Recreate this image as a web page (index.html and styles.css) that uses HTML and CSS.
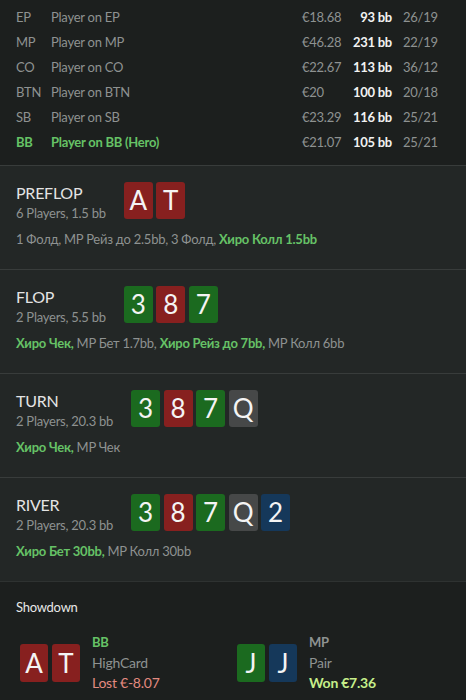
FILE: index.html
```html
<!DOCTYPE html>
<html lang="en">
<head>
    <meta charset="UTF-8">
    <meta name="viewport" content="width=device-width, initial-scale=1.0">
    <title>Hand History</title>
    <link rel="stylesheet" href="styles.css">
</head>
<body>
    <div class="players">
        <div class="player-row">
            <span class="pos">EP</span><span class="name">Player on EP</span>
            <span class="money">€18.68</span><span class="stack">93 bb</span><span class="ratio">26/19</span>
        </div>
        <div class="player-row">
            <span class="pos">MP</span><span class="name">Player on MP</span>
            <span class="money">€46.28</span><span class="stack">231 bb</span><span class="ratio">22/19</span>
        </div>
        <div class="player-row">
            <span class="pos">CO</span><span class="name">Player on CO</span>
            <span class="money">€22.67</span><span class="stack">113 bb</span><span class="ratio">36/12</span>
        </div>
        <div class="player-row">
            <span class="pos">BTN</span><span class="name">Player on BTN</span>
            <span class="money">€20</span><span class="stack">100 bb</span><span class="ratio">20/18</span>
        </div>
        <div class="player-row">
            <span class="pos">SB</span><span class="name">Player on SB</span>
            <span class="money">€23.29</span><span class="stack">116 bb</span><span class="ratio">25/21</span>
        </div>
        <div class="player-row hero">
            <span class="pos">BB</span><span class="name">Player on BB (Hero)</span>
            <span class="money">€21.07</span><span class="stack">105 bb</span><span class="ratio">25/21</span>
        </div>
    </div>

    <div class="street">
        <div class="street-head">
            <div class="street-info">
                <div class="street-title">PREFLOP</div>
                <div class="street-sub">6 Players, 1.5 bb</div>
            </div>
            <div class="cards">
                <span class="card red">A</span><span class="card red">T</span>
            </div>
        </div>
        <div class="actions">1 Фолд, MP Рейз до 2.5bb, 3 Фолд, <b>Хиро Колл 1.5bb</b></div>
    </div>

    <div class="street">
        <div class="street-head">
            <div class="street-info">
                <div class="street-title">FLOP</div>
                <div class="street-sub">2 Players, 5.5 bb</div>
            </div>
            <div class="cards">
                <span class="card green">3</span><span class="card red">8</span><span class="card green">7</span>
            </div>
        </div>
        <div class="actions"><b>Хиро Чек,</b> MP Бет 1.7bb, <b>Хиро Рейз до 7bb,</b> MP Колл 6bb</div>
    </div>

    <div class="street">
        <div class="street-head">
            <div class="street-info">
                <div class="street-title">TURN</div>
                <div class="street-sub">2 Players, 20.3 bb</div>
            </div>
            <div class="cards">
                <span class="card green">3</span><span class="card red">8</span><span class="card green">7</span><span class="card grey">Q</span>
            </div>
        </div>
        <div class="actions"><b>Хиро Чек,</b> MP Чек</div>
    </div>

    <div class="street">
        <div class="street-head">
            <div class="street-info">
                <div class="street-title">RIVER</div>
                <div class="street-sub">2 Players, 20.3 bb</div>
            </div>
            <div class="cards">
                <span class="card green">3</span><span class="card red">8</span><span class="card green">7</span><span class="card grey">Q</span><span class="card blue">2</span>
            </div>
        </div>
        <div class="actions"><b>Хиро Бет 30bb,</b> MP Колл 30bb</div>
    </div>

    <div class="showdown">
        <div class="showdown-title">Showdown</div>
        <div class="showdown-hands">
            <div class="hand">
                <div class="cards">
                    <span class="card red">A</span><span class="card red">T</span>
                </div>
                <div class="hand-info">
                    <div class="hand-pos hero-text">BB</div>
                    <div class="hand-rank">HighCard</div>
                    <div class="lost">Lost €-8.07</div>
                </div>
            </div>
            <div class="hand">
                <div class="cards">
                    <span class="card green">J</span><span class="card blue">J</span>
                </div>
                <div class="hand-info">
                    <div class="hand-pos">MP</div>
                    <div class="hand-rank">Pair</div>
                    <div class="won">Won €7.36</div>
                </div>
            </div>
        </div>
    </div>
</body>
</html>
```

FILE: styles.css
```css
body {
    margin: 0;
    font-family: Lato, "Open Sans", sans-serif;
    font-size: 13px;
    letter-spacing: -0.25px;
    background: #2b2e2d;
    color: #8e9291;
}

.players {
    background: #1c1f1e;
    padding: 5px 0 10px;
}

.player-row {
    display: grid;
    grid-template-columns: 35px 1fr 48px 42px 42px;
    padding: 0 32px 0 16px;
    line-height: 25px;
    white-space: nowrap;
}

.player-row .stack {
    color: #f2f2f2;
    font-weight: bold;
    text-align: right;
}

.player-row .ratio {
    padding-left: 11px;
}

.player-row.hero .pos,
.player-row.hero .name {
    color: #66c266;
    font-weight: bold;
}

.street {
    background: #232726;
    border-top: 1px solid #383c3b;
    padding: 16px 16px 21px;
}

.street-head {
    display: flex;
    align-items: flex-start;
}

.street-info {
    margin-right: 18px;
}

.street-title {
    font-size: 16px;
    line-height: 22px;
    color: #e4e4e4;
}

.street-sub {
    line-height: 18px;
}

.cards {
    display: flex;
    gap: 3.5px;
}

.card {
    width: 29px;
    height: 37px;
    border-radius: 3px;
    color: #f4f4f4;
    font-size: 26px;
    line-height: 37px;
    letter-spacing: 0;
    text-align: center;
}

.card.red { background: #87201f; }
.card.green { background: #1b6a1f; }
.card.grey { background: #464848; }
.card.blue { background: #15385a; }

.actions {
    margin-top: 8px;
    line-height: 18px;
}

.actions b {
    color: #66c266;
}

.showdown {
    background: #1c1f1e;
    border-top: 1px solid #2e3231;
    padding: 15px 16px 4px;
    height: 100px;
}

.showdown-title {
    color: #e8e8e8;
    line-height: 20px;
}

.showdown-hands {
    display: grid;
    grid-template-columns: 1fr 1fr;
    margin-top: 15px;
}

.hand {
    display: flex;
    align-items: center;
    padding-left: 4px;
}

.hand .cards {
    gap: 4px;
    margin-right: 12px;
}

.hand .card {
    width: 28px;
    height: 38px;
    line-height: 38px;
}

.hand-info {
    line-height: 20.5px;
}

.hand-pos {
    font-weight: bold;
}

.hero-text {
    color: #66c266;
}

.hand-rank {
    font-size: 14px;
}

.lost {
    font-size: 14px;
    color: #e38a80;
}

.won {
    font-size: 14px;
    font-weight: bold;
    color: #c6ee8a;
}
```
